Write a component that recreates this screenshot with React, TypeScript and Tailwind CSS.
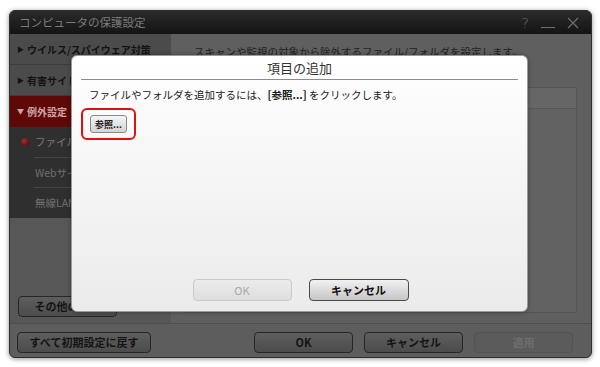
import React from "react";

const jp = { fontFamily: '"Noto Sans CJK JP", "Noto Sans", sans-serif' };

function DarkButton({ children, w, disabled }: { children: React.ReactNode; w: string; disabled?: boolean }) {
  return (
    <div
      className={`${w} h-[21px] rounded-[4px] border flex items-center justify-center text-[11px] font-bold ${
        disabled
          ? "border-[#535353] bg-[#5b5b5b] text-[#6e6e6e]"
          : "border-[#262626] bg-gradient-to-b from-[#5e5e5e] to-[#4c4c4c] text-[#141414]"
      }`}
    >
      {children}
    </div>
  );
}

export default function App() {
  return (
    <div className="w-[600px] h-[367px] bg-white relative overflow-hidden" style={jp}>
      {/* main window */}
      <div className="ml-[9px] mt-[10px] w-[583px] h-[348px] rounded-[6px] border border-[#2e2e2e] bg-[#5d5d5d] shadow-[0_1px_5px_rgba(0,0,0,0.45)] flex flex-col overflow-hidden">
        {/* title bar */}
        <div className="h-[23px] shrink-0 bg-gradient-to-b from-[#2b2b2b] to-[#141414] flex items-center pl-[9px] pr-[12px]">
          <span className="text-[11.5px] text-[#7b7b7b] leading-none">コンピュータの保護設定</span>
          <div className="ml-auto flex items-center gap-[12px] text-[#6f6f6f]">
            <span className="text-[14px] leading-none" style={{ fontFamily: '"DejaVu Sans", sans-serif', fontWeight: 300 }}>?</span>
            <div className="w-[14px] h-[1px] bg-[#6f6f6f] mt-[10px]" />
            <svg width="12" height="12" viewBox="0 0 12 12">
              <path d="M1 1 L11 11 M11 1 L1 11" stroke="#6f6f6f" strokeWidth="1.2" />
            </svg>
          </div>
        </div>

        {/* middle */}
        <div className="flex h-[289px] shrink-0">
          {/* sidebar */}
          <div className="w-[161px] shrink-0 flex flex-col bg-[#575757]">
            <div className="h-[31px] bg-[#4b4b4b] border-b border-[#3d3d3d] flex items-center pl-[7px] text-[10px] font-bold text-[#121212]">
              <span className="text-[7px] mr-[3px]">▶</span>ウイルス/スパイウェア対策
            </div>
            <div className="h-[31px] bg-[#4b4b4b] border-b border-[#3d3d3d] flex items-center pl-[7px] text-[10px] font-bold text-[#121212]">
              <span className="text-[7px] mr-[3px]">▶</span>有害サイト・迷惑メール対策
            </div>
            <div className="h-[31px] bg-[#5e0808] flex items-center pl-[7px] text-[10px] font-bold text-[#cfa3a3]">
              <span className="text-[7px] mr-[3px]">▼</span>例外設定
            </div>
            <div className="bg-[#2f2f2f] flex flex-col">
              <div className="h-[30px] flex items-center pl-[11px] text-[10.5px] text-[#7c7c7c]">
                <div className="w-[8px] h-[8px] rounded-full bg-[radial-gradient(circle_at_35%_35%,#a13030,#4a0404)] mr-[6px]" />
                ファイル/フォルダ
              </div>
              <div className="ml-[24px] h-[1px] bg-[#444]" />
              <div className="h-[29px] flex items-center pl-[25px] text-[10.5px] text-[#6f6f6f]">Webサイト</div>
              <div className="ml-[24px] h-[1px] bg-[#444]" />
              <div className="h-[30px] flex items-center pl-[25px] text-[10.5px] text-[#6f6f6f]">無線LANネットワーク</div>
            </div>
            <div className="flex-1" />
            <div className="pl-[8px] pb-[6px]">
              <DarkButton w="w-[99px]">その他の設定</DarkButton>
            </div>
          </div>

          {/* content */}
          <div className="flex-1 bg-[#5f5f5f] flex flex-col pl-[12px] pr-[14px] pb-[10px]">
            <div className="h-[53px] pt-[10px] pl-[11px] text-[10.5px] text-[#1f1f1f]">
              スキャンや監視の対象から除外するファイル/フォルダを設定します。
            </div>
            <div className="flex-1 border border-[#555555] bg-[#626262] flex flex-col">
              <div className="h-[21px] bg-[#666666] border-b border-[#575757]" />
            </div>
          </div>
        </div>

        {/* footer */}
        <div className="flex-1 border-t border-[#4f4f4f] flex items-start pt-[8px] pl-[7px] pr-[18px]">
          <DarkButton w="w-[134px]">すべて初期設定に戻す</DarkButton>
          <div className="ml-auto flex gap-[11px]">
            <DarkButton w="w-[99px]">OK</DarkButton>
            <DarkButton w="w-[99px]">キャンセル</DarkButton>
            <DarkButton w="w-[99px]" disabled>適用</DarkButton>
          </div>
        </div>
      </div>

      {/* modal dialog */}
      <div className="absolute left-[71px] top-[55px] w-[457px] h-[257px] rounded-[6px] border border-[#9a9a9a] bg-gradient-to-b from-[#ffffff] to-[#ebebeb] shadow-[0_0_4px_rgba(0,0,0,0.35)] flex flex-col px-[9px] pb-[10px]">
        <div className="h-[24px] border-b border-[#8c8c8c] flex items-center justify-center text-[13px] text-[#333]">
          項目の追加
        </div>
        <div className="pt-[8px] pl-[8px] text-[10.5px] text-[#1a1a1a] leading-[14px]">
          ファイルやフォルダを追加するには、<span className="font-bold">[参照...]</span> をクリックします。
        </div>
        <div className="mt-[6px] w-[55px] h-[32px] rounded-[6px] border-2 border-[#e01010] flex items-center justify-center">
          <div className="w-[37px] h-[18px] rounded-[3px] border border-[#8a8a8a] bg-gradient-to-b from-[#f6f6f6] to-[#d4d4d4] flex items-center justify-center text-[9px] font-bold text-[#222] leading-none">
            参照...
          </div>
        </div>
        <div className="flex-1" />
        <div className="flex justify-center gap-[17px] pl-[2px]">
          <div className="w-[99px] h-[22px] rounded-[4px] border border-[#cacaca] bg-gradient-to-b from-[#ececec] to-[#dedede] flex items-center justify-center text-[11px] text-[#a9a9a9]">
            OK
          </div>
          <div className="w-[100px] h-[22px] rounded-[4px] border border-[#4a4a4a] bg-gradient-to-b from-[#f2f2f2] to-[#c6c6c6] flex items-center justify-center text-[11px] font-bold text-[#111]">
            キャンセル
          </div>
        </div>
      </div>
    </div>
  );
}
